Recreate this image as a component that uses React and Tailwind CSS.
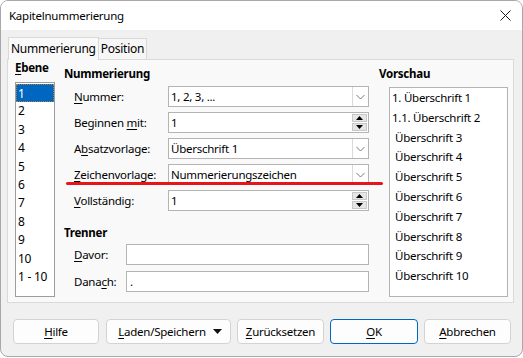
import React from "react";

const U = ({ children }) => (
  <span className="underline decoration-1 underline-offset-[2px]">{children}</span>
);

function Chevron() {
  return (
    <svg width="9" height="6" viewBox="0 0 9 6">
      <path d="M0.5 1 L4.5 5 L8.5 1" fill="none" stroke="#7a7a7a" strokeWidth="1" />
    </svg>
  );
}

function Combo({ value }) {
  return (
    <div className="flex h-[21px] w-[201px] border border-[#b4b4b4] bg-white">
      <div className="flex-1 pl-[2px] leading-[19px]">{value}</div>
      <div className="flex w-[16px] items-center justify-center border-l border-[#dadada]">
        <Chevron />
      </div>
    </div>
  );
}

function Spin({ value }) {
  return (
    <div className="flex h-[21px] w-[201px] border border-[#b4b4b4] bg-white">
      <div className="flex-1 pl-[2px] leading-[19px]">{value}</div>
      <div className="flex w-[17px] flex-col gap-[1px] p-[1px]">
        <div className="flex flex-1 items-center justify-center border border-[#c8c8c8] bg-[#e6e6e6]">
          <svg width="7" height="4" viewBox="0 0 7 4">
            <path d="M0 4 L3.5 0 L7 4 Z" fill="#000" />
          </svg>
        </div>
        <div className="flex flex-1 items-center justify-center border border-[#c8c8c8] bg-[#e6e6e6]">
          <svg width="7" height="4" viewBox="0 0 7 4">
            <path d="M0 0 L3.5 4 L7 0 Z" fill="#000" />
          </svg>
        </div>
      </div>
    </div>
  );
}

function Row({ label, children }) {
  return (
    <div className="flex h-[21px] items-center">
      <div className="w-[104px] pl-[10px]">{label}</div>
      {children}
    </div>
  );
}

function Btn({ children, w, focus }) {
  return (
    <div
      className={`flex h-[25px] items-center justify-center rounded-[4px] border bg-[#fdfdfd] ${
        focus ? "border-[#0067c0]" : "border-[#d3d3d3]"
      } ${w}`}
    >
      {children}
    </div>
  );
}

export default function App() {
  const levels = ["1", "2", "3", "4", "5", "6", "7", "8", "9", "10", "1 - 10"];
  const preview = [
    ["1. Überschrift 1", "pl-[2px]"],
    ["1.1. Überschrift 2", "pl-[2px]"],
    ["Überschrift 3", "pl-[5px]"],
    ["Überschrift 4", "pl-[5px]"],
    ["Überschrift 5", "pl-[5px]"],
    ["Überschrift 6", "pl-[5px]"],
    ["Überschrift 7", "pl-[5px]"],
    ["Überschrift 8", "pl-[5px]"],
    ["Überschrift 9", "pl-[5px]"],
    ["Überschrift 10", "pl-[5px]"],
  ];
  return (
    <div
      className="relative h-[358px] w-[523px] bg-white text-[11.5px] tracking-[-0.25px] text-black"
      style={{ fontFamily: '"Noto Sans", "Open Sans", sans-serif' }}
    >
      <div className="flex h-[357px] w-[523px] flex-col overflow-hidden rounded-[8px] border border-[#a8a8a8] bg-[#f0f0f0]">
        {/* Title bar */}
        <div className="flex h-[29px] items-center justify-between bg-white pl-[8px] pr-[11px]">
          <span className="leading-[16px]">Kapitelnummerierung</span>
          <svg width="11" height="11" viewBox="0 0 11 11">
            <path d="M0.5 0.5 L10.5 10.5 M10.5 0.5 L0.5 10.5" stroke="#1a1a1a" strokeWidth="1" />
          </svg>
        </div>

        <div className="flex flex-col px-[6px] pt-[7px]">
          {/* Tabs */}
          <div className="relative z-10 flex items-end">
            <div className="-mb-px ml-px h-[23px] border border-b-0 border-[#d9d9d9] bg-[#f9f9f9] px-[2px] text-[12px] leading-[22px]">
              Nummerierung
            </div>
            <div className="h-[21px] border border-b-0 border-l-0 border-[#d9d9d9] bg-[#f6f6f6] px-[2px] text-[12px] leading-[20px]">
              Position
            </div>
          </div>

          {/* Panel */}
          <div className="flex h-[244px] w-[507px] border border-[#dadada] bg-[#f9f9f9]">
            {/* Ebene */}
            <div className="ml-[7px] flex w-[40px] flex-col">
              <div className="font-bold leading-[16px]">
                <U>E</U>bene
              </div>
              <div className="mt-[6px] h-[215px] border border-[#9c9c9c] bg-white pt-[1px]">
                {levels.map((l, i) => (
                  <div
                    key={l}
                    className={`h-[18.4px] pl-[1px] text-[12px] leading-[18px] ${
                      i === 0 ? "border border-dotted border-[#b07a40] bg-[#0067c0] text-white" : "pl-[2px]"
                    }`}
                  >
                    {l}
                  </div>
                ))}
              </div>
            </div>

            {/* Nummerierung */}
            <div className="ml-[9px] flex w-[305px] flex-col">
              <div className="mt-[6px] font-bold leading-[16px]">Nummerierung</div>
              <div className="mt-[4px] flex flex-col gap-[5px]">
                <Row label={<><U>N</U>ummer:</>}>
                  <Combo value="1, 2, 3, ..." />
                </Row>
                <Row label={<>Beginnen <U>m</U>it:</>}>
                  <Spin value="1" />
                </Row>
                <Row label={<>A<U>b</U>satzvorlage:</>}>
                  <Combo value="Überschrift 1" />
                </Row>
                <Row label={<><U>Z</U>eichenvorlage:</>}>
                  <Combo value="Nummerierungszeichen" />
                </Row>
                <Row label={<><U>V</U>ollständig:</>}>
                  <Spin value="1" />
                </Row>
              </div>
              <div className="mt-[14px] font-bold leading-[16px]">Trenner</div>
              <div className="mt-[3px] flex flex-col gap-[6px]">
                <div className="flex h-[21px] items-center">
                  <div className="w-[62px] pl-[10px]">
                    <U>D</U>avor:
                  </div>
                  <div className="h-[21px] w-[243px] border border-[#b4b4b4] bg-white" />
                </div>
                <div className="flex h-[21px] items-center">
                  <div className="w-[62px] pl-[10px]">
                    Dana<U>c</U>h:
                  </div>
                  <div className="h-[21px] w-[243px] border border-[#b4b4b4] bg-white pl-[3px] leading-[19px]">
                    .
                  </div>
                </div>
              </div>
            </div>

            {/* Vorschau */}
            <div className="ml-[10px] flex flex-col">
              <div className="mt-[6px] font-bold leading-[16px]">Vorschau</div>
              <div className="ml-[10px] mt-[5px] h-[210px] w-[119px] border border-[#b4b4b4] bg-white">
                {preview.map(([t, c]) => (
                  <div key={t} className={`h-[19.8px] leading-[20px] ${c}`}>
                    {t}
                  </div>
                ))}
              </div>
            </div>
          </div>
        </div>

        {/* Buttons */}
        <div className="mt-[16px] flex pl-[12px]">
          <Btn w="w-[86px]">
            <U>H</U>ilfe
          </Btn>
          <div className="ml-[7px] flex h-[25px] w-[125px] items-center rounded-[4px] border border-[#d3d3d3] bg-[#fdfdfd] pl-[8px]">
            <span className="flex-1 pl-[2px] text-center">
              <U>L</U>aden/Speichern
            </span>
            <svg className="ml-[6px] mr-[8px]" width="9" height="5" viewBox="0 0 9 5">
              <path d="M0 0 L4.5 5 L9 0 Z" fill="#111" />
            </svg>
          </div>
          <div className="ml-[6px]">
            <Btn w="w-[87px]">
              <U>Z</U>urücksetzen
            </Btn>
          </div>
          <div className="ml-[6px]">
            <Btn w="w-[88px]" focus>
              <U>O</U>K
            </Btn>
          </div>
          <div className="ml-[6px]">
            <Btn w="w-[87px]">
              <U>A</U>bbrechen
            </Btn>
          </div>
        </div>
      </div>

      {/* Red annotation */}
      <div className="absolute left-[66px] top-[182px] h-[3px] w-[317px] rounded-full bg-[#e8141c]" />
    </div>
  );
}
